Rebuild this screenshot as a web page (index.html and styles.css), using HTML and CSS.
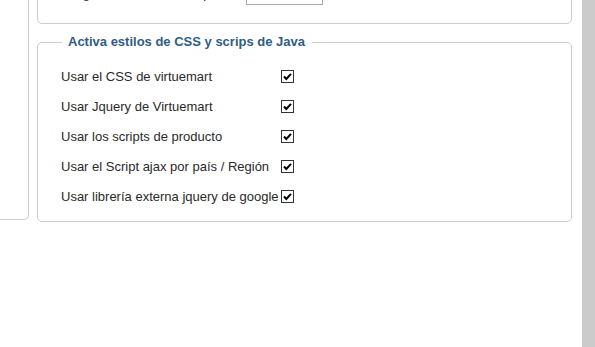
FILE: index.html
```html
<!DOCTYPE html>
<html>
<head>
  <title>Configuración</title>
  <link rel="stylesheet" href="styles.css">
</head>
<body>
  <div class="page">
    <div class="side"></div>

    <div class="main">
      <div class="box top-box">
        <div class="row">
          <span class="label">Longitud mínima de campo</span>
          <input type="text" class="field">
        </div>
      </div>

      <fieldset class="box">
        <legend>Activa estilos de CSS y scrips de Java</legend>
        <div class="row">
          <span class="label">Usar el CSS de virtuemart</span>
          <span class="check"><svg viewBox="0 0 11 11"><path d="M2 5.5 L4.3 8 L9 2.8" /></svg></span>
        </div>
        <div class="row">
          <span class="label">Usar Jquery de Virtuemart</span>
          <span class="check"><svg viewBox="0 0 11 11"><path d="M2 5.5 L4.3 8 L9 2.8" /></svg></span>
        </div>
        <div class="row">
          <span class="label">Usar los scripts de producto</span>
          <span class="check"><svg viewBox="0 0 11 11"><path d="M2 5.5 L4.3 8 L9 2.8" /></svg></span>
        </div>
        <div class="row">
          <span class="label">Usar el Script ajax por país / Región</span>
          <span class="check"><svg viewBox="0 0 11 11"><path d="M2 5.5 L4.3 8 L9 2.8" /></svg></span>
        </div>
        <div class="row">
          <span class="label">Usar librería externa jquery de google</span>
          <span class="check"><svg viewBox="0 0 11 11"><path d="M2 5.5 L4.3 8 L9 2.8" /></svg></span>
        </div>
      </fieldset>
    </div>

    <div class="scroll"></div>
  </div>
</body>
</html>
```

FILE: styles.css
```css
body {
  margin: 0;
  background: #ffffff;
  font-family: "Liberation Sans", Arial, sans-serif;
  font-size: 13px;
  color: #2a2a2a;
  overflow: hidden;
}

.page {
  display: flex;
  height: 347px;
}

.side {
  width: 28px;
  height: 219px;
  border-right: 1px solid #cccccc;
  border-bottom: 1px solid #cccccc;
  border-bottom-right-radius: 5px;
  flex-shrink: 0;
}

.main {
  margin-left: 8px;
  width: 535px;
  flex-shrink: 0;
}

.box {
  border: 1px solid #cccccc;
  border-radius: 5px;
  box-sizing: border-box;
}

.top-box {
  margin-top: -40px;
  height: 64px;
  padding: 19px 0 0 23px;
}

.top-box .row {
  height: 26px;
}

.top-box .label {
  width: 185px;
}

.field {
  width: 77px;
  height: 24px;
  box-sizing: border-box;
  margin: 0;
  border: 1px solid #aaaaaa;
  border-top-color: #999999;
  padding: 0;
  background: #ffffff;
}

fieldset.box {
  margin: 10px 0 0 0;
  padding: 11px 0 10px 23px;
  min-width: 0;
}

legend {
  margin-left: 1px;
  padding: 0 7px 0 6px;
  font-weight: bold;
  font-size: 13px;
  color: #2f5c84;
  line-height: 16px;
}

.row {
  display: flex;
  align-items: center;
  height: 30px;
}

.label {
  width: 220px;
  flex-shrink: 0;
  white-space: nowrap;
}

.check {
  width: 13px;
  height: 13px;
  box-sizing: border-box;
  border: 1px solid #333333;
  background: #ffffff;
  display: flex;
}

.check svg {
  width: 11px;
  height: 11px;
  fill: none;
  stroke: #000000;
  stroke-width: 2;
}

.scroll {
  margin-left: 10px;
  width: 13px;
  background: #cbcbcb;
  flex-shrink: 0;
}
```
